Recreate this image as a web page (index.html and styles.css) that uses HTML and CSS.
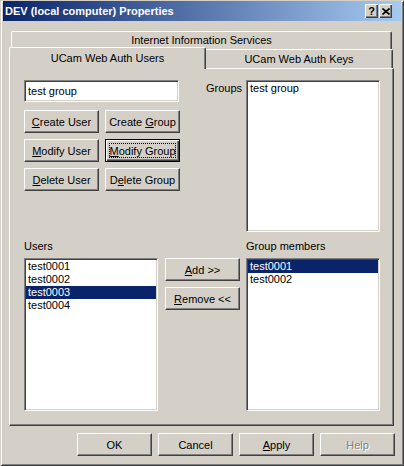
FILE: index.html
```html
<!DOCTYPE html>
<html>
<head>
    <title>DEV (local computer) Properties</title>
    <link rel="stylesheet" href="styles.css">
</head>
<body>
    <div class="window">
        <div class="titlebar">
            <span class="title">DEV (local computer) Properties</span>
            <div class="cap-btn help-btn">?</div>
            <div class="cap-btn close-btn">
                <svg width="8" height="7" viewBox="0 0 8 7"><path d="M0.5 0.5 L7.5 6.5 M7.5 0.5 L0.5 6.5" stroke="#000" stroke-width="1.6" fill="none"/></svg>
            </div>
        </div>

        <div class="tabs">
            <div class="tab tab-back">Internet Information Services</div>
            <div class="tab-row">
                <div class="tab tab-active">UCam Web Auth Users</div>
                <div class="tab tab-keys">UCam Web Auth Keys</div>
            </div>
        </div>

        <div class="panel">
            <div class="top-section">
                <div class="left-col">
                    <div class="textbox">test group</div>
                    <div class="btn-grid">
                        <button class="btn"><u>C</u>reate User</button>
                        <button class="btn">Create <u>G</u>roup</button>
                        <button class="btn"><u>M</u>odify User</button>
                        <button class="btn focused"><u>M</u>odify Group</button>
                        <button class="btn"><u>D</u>elete User</button>
                        <button class="btn">D<u>e</u>lete Group</button>
                    </div>
                </div>
                <div class="label groups-label">Groups</div>
                <div class="listbox groups-list">
                    <div class="item">test group</div>
                </div>
            </div>

            <div class="bottom-section">
                <div class="label">Users</div>
                <div></div>
                <div class="label">Group members</div>

                <div class="listbox">
                    <div class="item">test0001</div>
                    <div class="item">test0002</div>
                    <div class="item selected">test0003</div>
                    <div class="item">test0004</div>
                </div>
                <div class="mid-buttons">
                    <button class="btn"><u>A</u>dd &gt;&gt;</button>
                    <button class="btn"><u>R</u>emove &lt;&lt;</button>
                </div>
                <div class="listbox">
                    <div class="item selected">test0001</div>
                    <div class="item">test0002</div>
                </div>
            </div>
        </div>

        <div class="dialog-buttons">
            <button class="btn">OK</button>
            <button class="btn">Cancel</button>
            <button class="btn"><u>A</u>pply</button>
            <button class="btn disabled">Help</button>
        </div>
    </div>
</body>
</html>
```

FILE: styles.css
```css
* {
    box-sizing: border-box;
}

body {
    margin: 0;
    background-color: #d4d0c8;
    font-family: 'Liberation Sans', Arial, sans-serif;
    font-size: 11px;
    color: #000;
}

.window {
    width: 404px;
    height: 466px;
    padding: 1px 3px 0 3px;
    background-color: #d4d0c8;
    display: flex;
    flex-direction: column;
    box-shadow: inset 1px 1px #d4d0c8, inset -1px -1px #404040,
                inset 2px 2px #fff, inset -2px -2px #808080;
}

/* title bar */
.titlebar {
    height: 20px;
    display: flex;
    align-items: center;
    padding-left: 2px;
    padding-right: 9px;
    background: linear-gradient(to right, #0a246a, #a6caf0);
}

.title {
    color: #fff;
    font-weight: bold;
    font-size: 11px;
    flex: 1;
}

.cap-btn {
    width: 13px;
    height: 14px;
    background-color: #d4d0c8;
    display: flex;
    align-items: center;
    justify-content: center;
    font-weight: bold;
    font-size: 11px;
    box-shadow: inset 1px 1px #fff, inset -1px -1px #404040, inset -2px -2px #808080;
}

.help-btn {
    margin-right: 1px;
}

/* tabs */
.tabs {
    margin-top: 10px;
}

.tab {
    background-color: #d4d0c8;
    display: flex;
    align-items: center;
    justify-content: center;
    border-top: 1px solid #fff;
    border-left: 1px solid #fff;
    border-right: 1px solid #404040;
    border-radius: 2px 2px 0 0;
    box-shadow: inset -1px 0 #808080;
}

.tab-back {
    margin-left: 8px;
    width: 381px;
    height: 18px;
    padding-bottom: 1px;
}

.tab-row {
    display: flex;
    align-items: flex-end;
    height: 21px;
    margin-top: -2px;
}

.tab-active {
    position: relative;
    z-index: 1;
    margin-left: 6px;
    margin-bottom: -1px;
    width: 197px;
    height: 22px;
    padding-bottom: 2px;
}

.tab-keys {
    width: 188px;
    height: 19px;
    margin-left: -1px;
}

/* tab page */
.panel {
    margin-left: 6px;
    width: 385px;
    height: 358px;
    padding: 11px 13px 0 14px;
    border-top: 1px solid #fff;
    border-left: 1px solid #fff;
    border-right: 1px solid #404040;
    border-bottom: 1px solid #404040;
    box-shadow: inset -1px -1px #808080;
}

.top-section {
    display: flex;
    align-items: flex-start;
}

.left-col {
    width: 156px;
}

.textbox {
    width: 155px;
    height: 22px;
    background-color: #fff;
    padding: 3px 3px;
    line-height: 14px;
    border-top: 1px solid #808080;
    border-left: 1px solid #808080;
    border-right: 1px solid #fff;
    border-bottom: 1px solid #fff;
    box-shadow: inset 1px 1px #404040, inset -1px -1px #d4d0c8;
}

.btn-grid {
    margin-top: 8px;
    display: grid;
    grid-template-columns: 75px 75px;
    grid-auto-rows: 23px;
    gap: 6px;
}

.label {
    line-height: 13px;
}

.groups-label {
    margin-left: 26px;
    margin-top: 2px;
}

.groups-list {
    margin-left: auto;
    width: 134px;
    height: 152px;
}

.listbox {
    background-color: #fff;
    padding: 1px;
    border-top: 1px solid #808080;
    border-left: 1px solid #808080;
    border-right: 1px solid #fff;
    border-bottom: 1px solid #fff;
    box-shadow: inset 1px 1px #404040, inset -1px -1px #d4d0c8;
}

.item {
    height: 13px;
    line-height: 13px;
    padding-left: 2px;
    white-space: nowrap;
}

.item.selected {
    background-color: #0a246a;
    color: #fff;
}

.bottom-section {
    margin-top: 8px;
    display: grid;
    grid-template-columns: 134px 88px 134px;
    grid-template-rows: 13px 153px;
    row-gap: 5px;
}

.mid-buttons {
    margin-left: 7px;
    display: flex;
    flex-direction: column;
    gap: 6px;
}

/* buttons */
.btn {
    width: 75px;
    height: 23px;
    padding: 0;
    font: inherit;
    color: #000;
    background-color: #d4d0c8;
    border: 1px solid;
    border-color: #fff #404040 #404040 #fff;
    box-shadow: inset -1px -1px #808080;
}

.btn.focused {
    border-color: #000;
    box-shadow: inset 1px 1px #fff, inset -1px -1px #404040, inset -2px -2px #808080;
    outline: 1px dotted #000;
    outline-offset: -5px;
}

.btn.disabled {
    color: #808080;
    text-shadow: 1px 1px #fff;
}

.dialog-buttons {
    margin-top: 7px;
    margin-right: 6px;
    display: flex;
    justify-content: flex-end;
    gap: 6px;
}
```
